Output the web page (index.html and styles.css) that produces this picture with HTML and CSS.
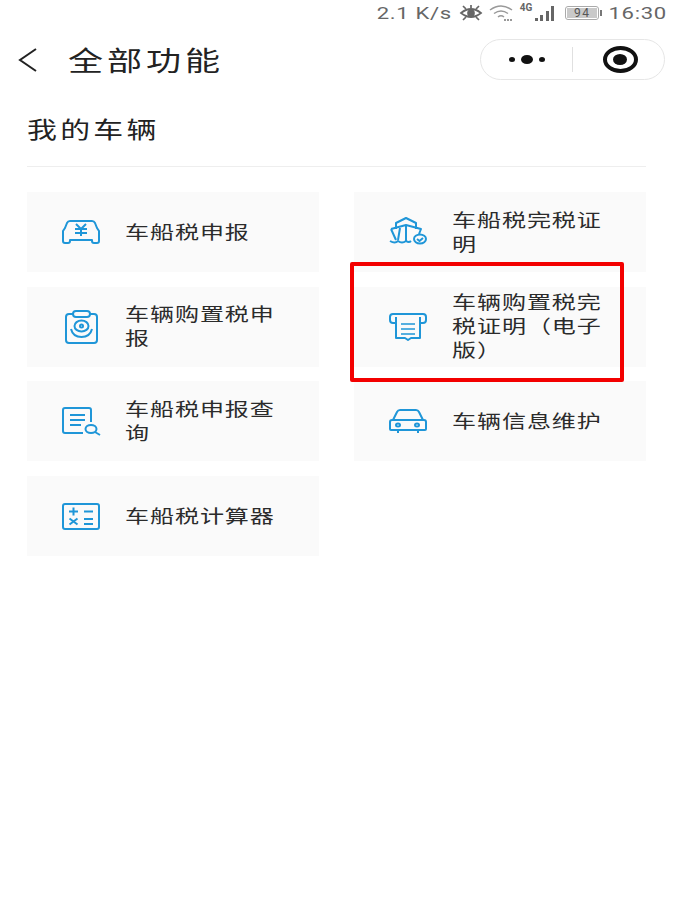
FILE: index.html
```html
<!DOCTYPE html>
<html lang="zh-CN">
<head>
    <meta charset="UTF-8">
    <title>全部功能</title>
    <link rel="stylesheet" href="styles.css">
</head>
<body>
    <div class="status-bar">
        <span class="speed">2.1 K/s</span>
        <svg class="st-eye" width="24" height="18" viewBox="0 0 24 18" fill="none" stroke="#666" stroke-width="1.7">
            <path d="M2 9q10-8 20 0q-10 8-20 0z"/>
            <circle cx="12" cy="9" r="3" fill="#666"/>
            <path d="M4 2l3 3M12 1v3M20 2l-3 3M4 16l3-3M20 16l-3-3"/>
        </svg>
        <svg class="st-wifi" width="26" height="18" viewBox="0 0 26 18" fill="none" stroke="#999" stroke-width="1.5">
            <path d="M1 6q11-8 22 0M5 9.500q7-5 14 0M9 13q3-2.500 6 0"/>
            <path d="M15 16h9" stroke-width="2" stroke-dasharray="2 1"/>
        </svg>
        <div class="signal">
            <span class="net">4G</span>
            <span class="bar b1"></span>
            <span class="bar b2"></span>
            <span class="bar b3"></span>
            <span class="bar b4"></span>
        </div>
        <div class="battery"><span class="level">94</span></div>
        <span class="batt-tip"></span>
        <span class="clock">16:30</span>
    </div>

    <div class="nav">
        <svg class="back" width="22" height="26" viewBox="0 0 22 26" fill="none" stroke="#222" stroke-width="2">
            <path d="M18 2L2 13l16 11"/>
        </svg>
        <h1>全部功能</h1>
        <div class="capsule">
            <div class="cap-half">
                <span class="dot"></span><span class="dot big"></span><span class="dot"></span>
            </div>
            <span class="cap-line"></span>
            <div class="cap-half">
                <span class="target"></span>
            </div>
        </div>
    </div>

    <div class="section">
        <h2><span class="section-title">我的车辆</span></h2>
        <div class="grid">
            <div class="card">
                <svg class="icon" width="40" height="26" viewBox="0 0 40 26" fill="none" stroke="#1f96d8" stroke-width="2" stroke-linejoin="round">
                    <path d="M9 2h22q2 0 3 2l2 5 2 3v10a2 2 0 0 1-2 2h-3a2 2 0 0 1-2-2v-1H9v1a2 2 0 0 1-2 2H4a2 2 0 0 1-2-2V12l2-3 2-5q1-2 3-2z"/>
                    <path d="M15 5l5 5 5-5M14 10h12M14 14h12M20 10v7"/>
                </svg>
                <span class="label">车船税申报</span>
            </div>
            <div class="card">
                <svg class="icon" width="40" height="32" viewBox="0 0 40 32" fill="none" stroke="#1f96d8" stroke-width="2" stroke-linejoin="round">
                    <path d="M8 13V7l10-5 10 5v6M18 10v15"/>
                    <path d="M3 13l15-4 15 4-2 5M3 13l5 11M12 12l-2 12"/>
                    <path d="M2 25q5 3 8 0q4 3 8 0q3 2 5 0"/>
                    <ellipse cx="32" cy="23" rx="6" ry="4.500"/>
                    <path d="M29 23l2.500 2 3.500-3"/>
                </svg>
                <span class="label">车船税完税证明</span>
            </div>
            <div class="card">
                <svg class="icon" width="40" height="34" viewBox="0 0 40 34" fill="none" stroke="#1f96d8" stroke-width="2" stroke-linejoin="round">
                    <rect x="5" y="4" width="31" height="29" rx="3"/>
                    <rect x="12" y="1" width="17" height="6" rx="3" fill="#fafafa"/>
                    <ellipse cx="20.500" cy="16" rx="7" ry="5.500"/>
                    <circle cx="20.500" cy="16" r="1.500"/>
                    <path d="M10 19q2 8 10.500 8T31 19"/>
                </svg>
                <span class="label">车辆购置税申报</span>
            </div>
            <div class="card">
                <svg class="icon" width="40" height="30" viewBox="0 0 40 30" fill="none" stroke="#1f96d8" stroke-width="2" stroke-linejoin="round">
                    <path d="M8 11H5a3 3 0 0 1-3-3V5a3 3 0 0 1 3-3h30a3 3 0 0 1 3 3v3a3 3 0 0 1-3 3h-3"/>
                    <path d="M8 5v21h9l3 2 3-2h9V5"/>
                    <path d="M13 12h14M13 17h14M13 22h14" stroke-width="1.600"/>
                </svg>
                <span class="label">车辆购置税完税证明（电子版）</span>
            </div>
            <div class="card">
                <svg class="icon" width="40" height="30" viewBox="0 0 40 30" fill="none" stroke="#1f96d8" stroke-width="2" stroke-linejoin="round">
                    <path d="M30 16V4a2 2 0 0 0-2-2H4a2 2 0 0 0-2 2v21a2 2 0 0 0 2 2h18"/>
                    <path d="M9 9h15M9 14h15M9 19h11"/>
                    <ellipse cx="30" cy="23" rx="5.500" ry="4"/>
                    <path d="M34 26l5 3"/>
                </svg>
                <span class="label">车船税申报查询</span>
            </div>
            <div class="card">
                <svg class="icon" width="40" height="26" viewBox="0 0 40 26" fill="none" stroke="#1f96d8" stroke-width="2" stroke-linejoin="round">
                    <path d="M12 2h16q2 0 3 2l4 8h1a2 2 0 0 1 2 2v7a1 1 0 0 1-1 1H3a1 1 0 0 1-1-1v-7a2 2 0 0 1 2-2h1l4-8q1-2 3-2z"/>
                    <path d="M5 12h30M10 22v3M30 22v3"/>
                    <ellipse cx="10" cy="17" rx="2" ry="1.500"/>
                    <ellipse cx="29" cy="17" rx="2" ry="1.500"/>
                </svg>
                <span class="label">车辆信息维护</span>
            </div>
            <div class="card">
                <svg class="icon" width="40" height="28" viewBox="0 0 40 28" fill="none" stroke="#1f96d8" stroke-width="2" stroke-linejoin="round">
                    <rect x="2" y="2" width="36" height="25" rx="2"/>
                    <path d="M8 9.500h9M12.500 5.500v8M23 9.500h9M8.500 16.500l8 6M16.500 16.500l-8 6M23 17h9M23 22h9"/>
                </svg>
                <span class="label">车船税计算器</span>
            </div>
        </div>
    </div>

    <div class="highlight"></div>
</body>
</html>
```

FILE: styles.css
```css
body {
    margin: 0;
    background: white;
    font-family: "Noto Sans CJK SC", "Liberation Sans", sans-serif;
    color: #222;
    position: relative;
    height: 907px;
    overflow: hidden;
}

/* the screenshot is stretched sideways, text gets scaleX to follow it */
.status-bar {
    height: 26px;
    display: flex;
    align-items: center;
    justify-content: flex-end;
    padding-right: 12px;
    color: #666;
    font-family: Roboto, sans-serif;
    font-size: 17px;
    letter-spacing: 0.500px;
}

.speed {
    margin-right: 7px;
    transform: scaleX(1.3);
    transform-origin: right;
}

.st-wifi {
    margin-left: 6px;
}

.signal {
    display: flex;
    align-items: flex-end;
    gap: 2.500px;
    height: 16px;
    margin-left: 5px;
    position: relative;
    padding-left: 15px;
}

.net {
    position: absolute;
    left: 0;
    top: -3px;
    font-size: 10px;
    letter-spacing: 0;
    font-weight: 700;
}

.bar {
    width: 3px;
    background: #666;
}

.b1 { height: 3px; }
.b2 { height: 6px; }
.b3 { height: 10px; }
.b4 { height: 15px; }

.battery {
    width: 34px;
    height: 14px;
    margin-left: 11px;
    border: 1px solid #aaa;
    border-radius: 3px;
    padding: 1px;
    box-sizing: border-box;
}

.level {
    display: block;
    height: 100%;
    background: #c9c9c9;
    font-size: 12px;
    line-height: 10px;
    text-align: center;
    color: #555;
    letter-spacing: 1.500px;
}

.batt-tip {
    width: 2px;
    height: 6px;
    margin-left: 1px;
    background: #777;
}

.clock {
    margin-left: 20px;
    transform: scaleX(1.3);
    transform-origin: right;
}

.nav {
    height: 41px;
    margin-top: 13px;
    display: flex;
    align-items: center;
    padding: 0 14px 0 18px;
}

.back {
    flex: none;
}

.nav h1 {
    margin: 0 0 0 28px;
    font-size: 27px;
    font-weight: 400;
    letter-spacing: 3px;
    flex: 1;
    color: #222;
    transform: scaleX(1.3);
    transform-origin: left;
}

.capsule {
    width: 185px;
    height: 41px;
    box-sizing: border-box;
    border: 1px solid #e6e6e6;
    border-radius: 21px;
    display: flex;
    align-items: center;
}

.cap-half {
    flex: 1;
    display: flex;
    align-items: center;
    justify-content: center;
    gap: 6px;
}

.cap-line {
    width: 1px;
    height: 25px;
    background: #e0e0e0;
}

.dot {
    width: 6px;
    height: 5px;
    border-radius: 50%;
    background: #111;
}

.dot.big {
    width: 12px;
    height: 9px;
}

.target {
    width: 35px;
    height: 27px;
    margin-left: 3px;
    box-sizing: border-box;
    border: 4px solid #111;
    border-radius: 50%;
    display: flex;
    align-items: center;
    justify-content: center;
}

.target::after {
    content: "";
    width: 14px;
    height: 11px;
    border-radius: 50%;
    background: #111;
}

.section {
    padding: 0 33px 0 27px;
}

.section h2 {
    margin: 0;
    padding: 34px 0 24px;
    font-size: 23px;
    line-height: 28px;
    font-weight: 400;
    border-bottom: 1px solid #eeeeee;
}

.section-title {
    display: inline-block;
    letter-spacing: 2.500px;
    transform: scaleX(1.3);
    transform-origin: left;
}

.grid {
    margin-top: 25px;
    display: grid;
    grid-template-columns: 292px 292px;
    column-gap: 35px;
    row-gap: 14.700px;
}

.card {
    height: 80px;
    background: #fafafa;
    display: flex;
    align-items: center;
}

.icon {
    flex: none;
    margin-left: 34px;
    margin-right: 24px;
}

.label {
    font-size: 18.500px;
    line-height: 24px;
    letter-spacing: 0.700px;
    color: #2b2b2b;
    width: 120px;
    padding-bottom: 3px;
    transform: scaleX(1.3);
    transform-origin: left;
}

.highlight {
    position: absolute;
    left: 350px;
    top: 262px;
    width: 274px;
    height: 120px;
    box-sizing: border-box;
    border: 4px solid #f30000;
    border-radius: 2px;
}
```
